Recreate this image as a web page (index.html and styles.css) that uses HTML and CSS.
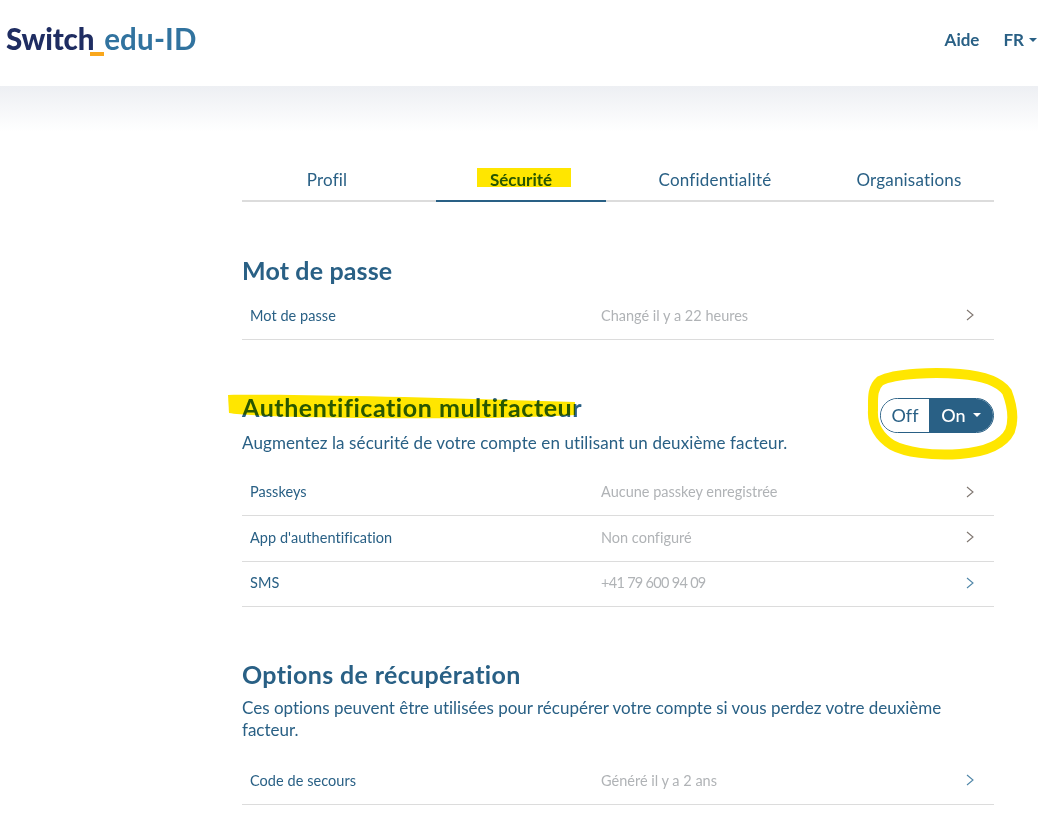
FILE: index.html
```html
<!DOCTYPE html>
<html lang="fr">
<head>
<meta charset="utf-8">
<title>Switch edu-ID</title>
<link rel="stylesheet" href="styles.css">
</head>
<body>
<header class="topbar">
  <div class="logo"><span class="logo-switch">Switch</span><span class="logo-mark"></span><span class="logo-edu">edu-ID</span></div>
  <nav class="topnav">
    <a class="topnav-link">Aide</a>
    <a class="topnav-link">FR<span class="caret caret-nav"></span></a>
  </nav>
</header>
<div class="fade"></div>
<main class="content">
  <div class="tabs">
    <a class="tab">Profil</a>
    <a class="tab tab-active">Sécurité</a>
    <a class="tab">Confidentialité</a>
    <a class="tab">Organisations</a>
  </div>

  <section class="section section-password">
    <h2 class="section-title">Mot de passe</h2>
    <div class="rows">
      <div class="row"><span class="row-label">Mot de passe</span><span class="row-value">Changé il y a 22 heures</span><svg class="chev" viewBox="0 0 8 12"><path d="M1 1l6 5-6 5"/></svg></div>
    </div>
  </section>

  <section class="section section-mfa">
    <div class="section-head">
      <h2 class="section-title">Authentification multifacteur</h2>
      <div class="toggle"><span class="toggle-off">Off</span><span class="toggle-on">On<span class="caret caret-on"></span></span></div>
    </div>
    <p class="section-desc">Augmentez la sécurité de votre compte en utilisant un deuxième facteur.</p>
    <div class="rows">
      <div class="row"><span class="row-label">Passkeys</span><span class="row-value">Aucune passkey enregistrée</span><svg class="chev" viewBox="0 0 8 12"><path d="M1 1l6 5-6 5"/></svg></div>
      <div class="row"><span class="row-label">App d'authentification</span><span class="row-value">Non configuré</span><svg class="chev" viewBox="0 0 8 12"><path d="M1 1l6 5-6 5"/></svg></div>
      <div class="row"><span class="row-label">SMS</span><span class="row-value row-value-phone">+41 79 600 94 09</span><svg class="chev chev-blue" viewBox="0 0 8 12"><path d="M1 1l6 5-6 5"/></svg></div>
    </div>
  </section>

  <section class="section section-recovery">
    <h2 class="section-title">Options de récupération</h2>
    <p class="section-desc">Ces options peuvent être utilisées pour récupérer votre compte si vous perdez votre deuxième facteur.</p>
    <div class="rows">
      <div class="row"><span class="row-label">Code de secours</span><span class="row-value">Généré il y a 2 ans</span><svg class="chev chev-blue" viewBox="0 0 8 12"><path d="M1 1l6 5-6 5"/></svg></div>
    </div>
  </section>
</main>

<svg class="marker" viewBox="0 0 1038 827" aria-hidden="true">
  <rect class="marker-fill" x="477" y="168" width="94" height="19"/>
  <path class="marker-fill" d="M228 395 C300 394 450 398 575 402 L575 415 C500 419 400 419 300 417 C270 416 240 415 229 413 Z"/>
  <path class="marker-line" d="M880 381 C895 373 935 372 960 374 C985 376 1000 382 1007 392 C1012 405 1014 420 1010 431 C1003 445 985 452 960 454 C930 456 905 452 892 445 C878 436 872 425 873 410 C873 398 872 388 880 381 Z"/>
</svg>
</body>
</html>
```
FILE: styles.css
```css
* { box-sizing: border-box; }
html, body { margin: 0; padding: 0; background: #fff; }
body {
  font-family: Lato, "Open Sans", sans-serif;
  font-variant-ligatures: none;
  color: #296085;
  height: 827px;
  overflow: hidden;
  position: relative;
}
.topbar {
  height: 86px;
  display: flex;
  justify-content: space-between;
  align-items: flex-start;
  padding: 21px 0 0 6px;
}
.logo {
  display: flex;
  align-items: baseline;
  font-size: 29.5px;
  font-weight: 900;
  letter-spacing: -0.2px;
  line-height: 36px;
}
.logo-switch { color: #1f2d62; }
.logo-mark {
  width: 14px;
  height: 4px;
  margin-left: -4px;
  background: #f9a71c;
  position: relative;
  top: 6px;
}
.logo-edu { color: #31739f; font-weight: 700; letter-spacing: 0.2px; }
.topnav {
  display: flex;
  gap: 24px;
  padding-top: 9px;
  padding-right: 1px;
  font-size: 17px;
  font-weight: 700;
  line-height: 20px;
}
.topnav-link { color: #296085; display: inline-flex; align-items: center; }
.caret {
  display: inline-block;
  border-left: 4px solid transparent;
  border-right: 4px solid transparent;
  border-top: 4px solid currentColor;
}
.caret-nav { margin-left: 5px; }
.caret-on { margin-left: 7px; color: #fff; }
.fade {
  height: 46px;
  background: linear-gradient(#edeff3, #ffffff);
}
.content {
  width: 752px;
  margin-left: 242px;
  padding-top: 32px;
}
.tabs {
  display: grid;
  grid-template-columns: repeat(4, 170px);
  justify-content: space-between;
  border-bottom: 2px solid #dcdcdc;
  height: 38px;
}
.tab {
  text-align: center;
  font-size: 17px;
  letter-spacing: 0.2px;
  line-height: 32px;
  color: #296085;
  height: 38px;
}
.tab-active {
  font-weight: 700;
  letter-spacing: 0;
  border-bottom: 2px solid #296085;
}
.section-password { margin-top: 54px; }
.section-mfa { margin-top: 53px; }
.section-recovery { margin-top: 54px; }
.section-title {
  margin: 0;
  font-size: 25px;
  font-weight: 700;
  line-height: 28px;
  color: #296085;
}
.section-password .section-title { letter-spacing: 0.15px; }
.section-mfa .section-title { letter-spacing: 0.55px; }
.section-recovery .section-title { letter-spacing: 0.35px; line-height: 26px; }
.section-head {
  display: flex;
  justify-content: space-between;
  align-items: flex-start;
  height: 32px;
}
.section-desc {
  margin: 10px 0 0;
  font-size: 17px;
  line-height: 22px;
}
.section-mfa .section-desc { margin-top: 7px; letter-spacing: 0.1px; }
.rows { margin-top: 17px; }
.section-password .rows { margin-top: 10px; }
.section-recovery .rows { margin-top: 18px; }
.row {
  display: grid;
  grid-template-columns: 351px 1fr 8px;
  align-items: center;
  height: 45.5px;
  padding: 0 20px 2px 8px;
  border-bottom: 1px solid #dcdcdc;
}
.row-label { font-size: 14.5px; letter-spacing: 0.05px; color: #296085; }
.row-value { font-size: 14.5px; color: #b0b3b6; }
.row-value-phone { letter-spacing: -0.7px; }
.chev { width: 8px; height: 12px; }
.chev path { fill: none; stroke: #7f7670; stroke-width: 1.1; }
.chev-blue path { stroke: #4f86a8; }
.toggle {
  display: flex;
  width: 114px;
  height: 35px;
  margin-top: 5px;
  border-radius: 18px;
  border: 1px solid #296085;
  overflow: hidden;
  font-size: 18px;
}
.toggle-off {
  width: 48px;
  text-align: center;
  line-height: 32px;
  background: #fff;
}
.toggle-on {
  flex: 1;
  background: #296085;
  color: #fff;
  font-weight: 500;
  display: flex;
  align-items: center;
  justify-content: center;
  padding-bottom: 1px;
}
.marker {
  position: absolute;
  left: 0;
  top: 0;
  width: 1038px;
  height: 827px;
  mix-blend-mode: multiply;
  pointer-events: none;
}
.marker-fill { fill: #ffe600; }
.marker-line { fill: none; stroke: #ffe600; stroke-width: 10; stroke-linecap: round; }
```
